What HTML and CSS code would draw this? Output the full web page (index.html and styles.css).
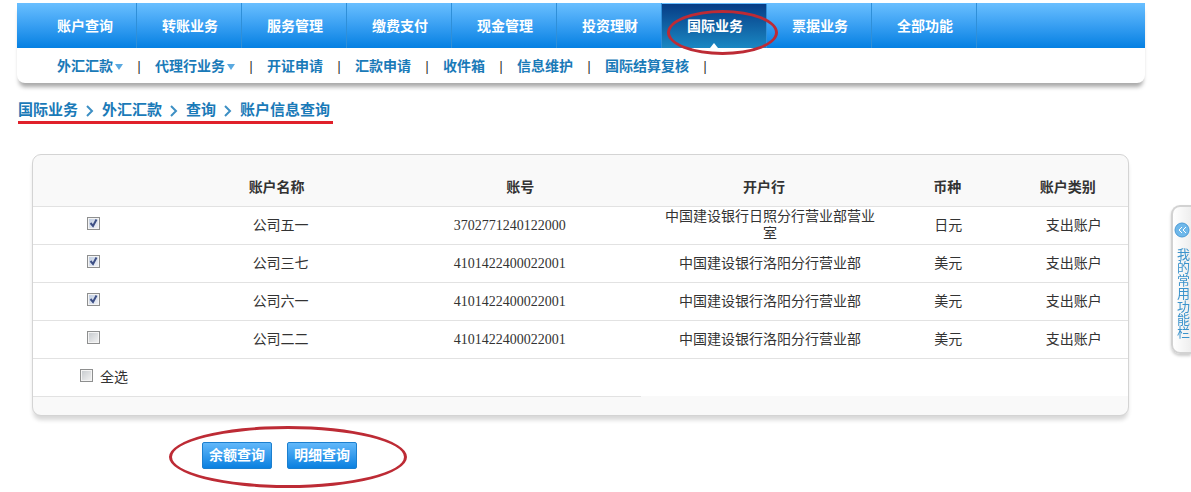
FILE: index.html
```
<!doctype html>
<html lang="zh-CN">
<head>
  <meta charset="utf-8">
  <meta name="viewport" content="width=device-width, initial-scale=1">
  <title>账户信息查询</title>
  <link rel="stylesheet" href="styles.css">
</head>
<body>
  <header class="header">
    <nav class="main-nav">
      <a href="#">账户查询</a>
      <a href="#">转账业务</a>
      <a href="#">服务管理</a>
      <a href="#">缴费支付</a>
      <a href="#">现金管理</a>
      <a href="#">投资理财</a>
      <a href="#" class="active">国际业务<span class="circle circle-nav"></span></a>
      <a href="#">票据业务</a>
      <a href="#">全部功能</a>
    </nav>
    <nav class="sub-nav">
      <a href="#" class="has-menu">外汇汇款</a><span class="bar">|</span>
      <a href="#" class="has-menu">代理行业务</a><span class="bar">|</span>
      <a href="#">开证申请</a><span class="bar">|</span>
      <a href="#">汇款申请</a><span class="bar">|</span>
      <a href="#">收件箱</a><span class="bar">|</span>
      <a href="#">信息维护</a><span class="bar">|</span>
      <a href="#">国际结算复核</a><span class="bar">|</span>
    </nav>
  </header>

  <div class="crumbs">
    <a href="#">国际业务</a>
    <svg class="sep" viewBox="0 0 24 12"><path d="M9 1l5 5-5 5"/></svg>
    <a href="#">外汇汇款</a>
    <svg class="sep" viewBox="0 0 24 12"><path d="M9 1l5 5-5 5"/></svg>
    <a href="#">查询</a>
    <svg class="sep" viewBox="0 0 24 12"><path d="M9 1l5 5-5 5"/></svg>
    <a href="#">账户信息查询</a>
  </div>

  <form class="content" onsubmit="return false;">
    <div class="card">
      <table class="accounts">
        <colgroup>
          <col class="c-check"><col class="c-name"><col class="c-no"><col class="c-bank"><col class="c-cur"><col class="c-type">
        </colgroup>
        <thead>
          <tr><th></th><th>账户名称</th><th>账号</th><th>开户行</th><th>币种</th><th>账户类别</th></tr>
        </thead>
        <tbody>
          <tr>
            <td><input type="checkbox" aria-label="公司五一" checked></td>
            <td class="name">公司五一</td>
            <td class="no">3702771240122000</td>
            <td class="bank">中国建设银行日照分行营业部营业室</td>
            <td class="cur">日元</td>
            <td class="type">支出账户</td>
          </tr>
          <tr>
            <td><input type="checkbox" aria-label="公司三七" checked></td>
            <td class="name">公司三七</td>
            <td class="no">4101422400022001</td>
            <td class="bank">中国建设银行洛阳分行营业部</td>
            <td class="cur">美元</td>
            <td class="type">支出账户</td>
          </tr>
          <tr>
            <td><input type="checkbox" aria-label="公司六一" checked></td>
            <td class="name">公司六一</td>
            <td class="no">4101422400022001</td>
            <td class="bank">中国建设银行洛阳分行营业部</td>
            <td class="cur">美元</td>
            <td class="type">支出账户</td>
          </tr>
          <tr>
            <td><input type="checkbox" aria-label="公司二二"></td>
            <td class="name">公司二二</td>
            <td class="no">4101422400022001</td>
            <td class="bank">中国建设银行洛阳分行营业部</td>
            <td class="cur">美元</td>
            <td class="type">支出账户</td>
          </tr>
          <tr>
            <td colspan="3" class="all"><input type="checkbox" id="all"><label for="all">全选</label></td>
            <td colspan="3" class="blank"></td>
          </tr>
        </tbody>
      </table>
    </div>
    <div class="buttons">
      <button type="button">余额查询</button>
      <button type="button">明细查询</button>
      <span class="circle circle-buttons"></span>
    </div>
  </form>

  <a href="#" class="side-tab">
    <svg viewBox="0 0 16 16"><circle cx="8" cy="8" r="7"/><path d="M8 5L5 8l3 3M12 5L9 8l3 3"/></svg>
    <span>我的常用功能栏</span>
  </a>
</body>
</html>
```
FILE: styles.css
```
* { box-sizing: border-box; }
body {
  margin: 0;
  padding: 3px 46px 22px 17px;
  background: #fff;
  color: #333;
  font: 14px/17px "Liberation Serif", "Noto Sans CJK SC", sans-serif;
}
a { text-decoration: none; color: #1a7ab8; }

/* top menu */
.header {
  border-radius: 0 0 8px 8px;
  box-shadow: 0 6px 4px -2px #aaa;
}
.main-nav {
  display: flex;
  height: 45px;
  padding-left: 15px;
  background: linear-gradient(#69bfff, #389ff2 50%, #0580e2);
}
.main-nav a {
  padding: 15px 23px 0 25px;
  border-right: 1px solid #2f8fd8;
  color: #fff;
  font-weight: bold;
}
.main-nav .active {
  position: relative;
  margin-top: 1px;
  padding-top: 14px;
  background: linear-gradient(#073c85, #1a88c3);
}
.main-nav .active::after {
  content: "";
  position: absolute;
  left: 50%;
  bottom: 0;
  margin-left: -4px;
  border: 4px solid transparent;
  border-top: 0;
  border-bottom: 5px solid #fff;
}
.sub-nav {
  display: flex;
  align-items: center;
  gap: 14px;
  height: 35px;
  padding: 2px 0 0 40px;
  font-weight: bold;
}
.sub-nav .bar {
  width: 4px;
  color: #222;
  text-align: center;
}
.has-menu::after {
  content: "";
  display: inline-block;
  margin: 0 0 1px 2px;
  border: 4px solid transparent;
  border-top: 6px solid #5aa9e0;
  border-bottom: 0;
}

/* breadcrumb */
.crumbs {
  display: flex;
  align-items: center;
  width: max-content;
  margin: 17px 0 0 1px;
  padding-right: 3px;
  border-bottom: 3px solid #e0202a;
  font-size: 15px;
  line-height: 21px;
  font-weight: bold;
}
.crumbs .sep {
  width: 24px;
  height: 12px;
  fill: none;
  stroke: #3d8fc4;
  stroke-width: 2;
}

/* account list */
.content { padding: 30px 16px 0 15px; }
.card {
  overflow: hidden;
  padding-bottom: 18px;
  border: 1px solid #d4d4d4;
  border-radius: 9px;
  background: #f9f9f9;
  box-shadow: 0 5px 4px -1px #d8d8d8;
}
.accounts {
  width: 100%;
  table-layout: fixed;
  border-collapse: collapse;
}
.c-check { width: 11%; }
.c-name { width: 22.5%; }
.c-no { width: 22%; }
.c-bank { width: 22.5%; }
.c-cur { width: 11%; }
.c-type { width: 11%; }
.accounts th {
  height: 51px;
  padding: 14px 0 0;
}
.accounts td {
  height: 38px;
  padding: 0;
  border-top: 1px solid #e2e2e2;
  background: #fff;
  text-align: center;
}
.accounts .name { padding-left: 8px; }
.accounts .no { padding-left: 54px; text-align: left; }
.accounts .bank { padding: 0 10px 0 22px; }
.accounts .cur { padding-left: 2px; }
.accounts .type { padding-left: 12px; }
.accounts .all {
  padding-left: 47px;
  border-bottom: 1px solid #e2e2e2;
  text-align: left;
}
input[type=checkbox] {
  appearance: none;
  width: 13px;
  height: 13px;
  margin: 0;
  border: 1px solid #8e8f8f;
  background: linear-gradient(135deg, #c4c8cc, #f4f4f4);
  box-shadow: inset 0 0 0 1px #f4f4f4;
  vertical-align: 0;
}
input[type=checkbox]:checked {
  background: url("data:image/svg+xml,%3Csvg xmlns='http://www.w3.org/2000/svg' viewBox='0 0 11 11'%3E%3Cpath d='M2.500 5l2.500 3 3.500-6.500' fill='none' stroke='%233d4f85' stroke-width='2'/%3E%3C/svg%3E"), linear-gradient(135deg, #bccbe0, #f4f4f8);
}
.all label { margin-left: 7px; }

.buttons {
  position: relative;
  display: flex;
  gap: 15px;
  width: max-content;
  margin: 26px 0 0 170px;
}
.buttons button {
  width: 70px;
  height: 27px;
  padding: 0 0 2px;
  border: 1px solid #1c7fce;
  border-radius: 2px;
  background: linear-gradient(#62b8fa, #0a80e0);
  color: #fff;
  font: bold 14px/17px "Noto Sans CJK SC", sans-serif;
}

/* red marker rings */
.circle {
  position: absolute;
  border: 3px solid #bd2b35;
  border-radius: 50%;
  pointer-events: none;
}
.circle-nav { z-index: 1; top: 6px; left: 5px; width: 111px; height: 45px; }
.circle-buttons { top: -16px; left: -33px; width: 238px; height: 62px; }

.side-tab {
  position: fixed;
  top: 205px;
  right: 0;
  display: flex;
  flex-direction: column;
  align-items: center;
  gap: 10px;
  width: 20px;
  height: 149px;
  padding-top: 15px;
  border: 2px solid #d2d2d2;
  border-right: 0;
  border-radius: 9px 0 0 9px;
  background: linear-gradient(90deg, #fff, #eee);
  box-shadow: 0 2px 3px #ccc;
  color: #3b93cc;
  font-size: 13px;
  line-height: 16px;
}
.side-tab svg { flex: none; width: 16px; height: 16px; }
.side-tab circle { fill: #6fb8ea; stroke: #4c9bd6; }
.side-tab path { fill: none; stroke: #fff; }
.side-tab span { writing-mode: vertical-rl; }
```
